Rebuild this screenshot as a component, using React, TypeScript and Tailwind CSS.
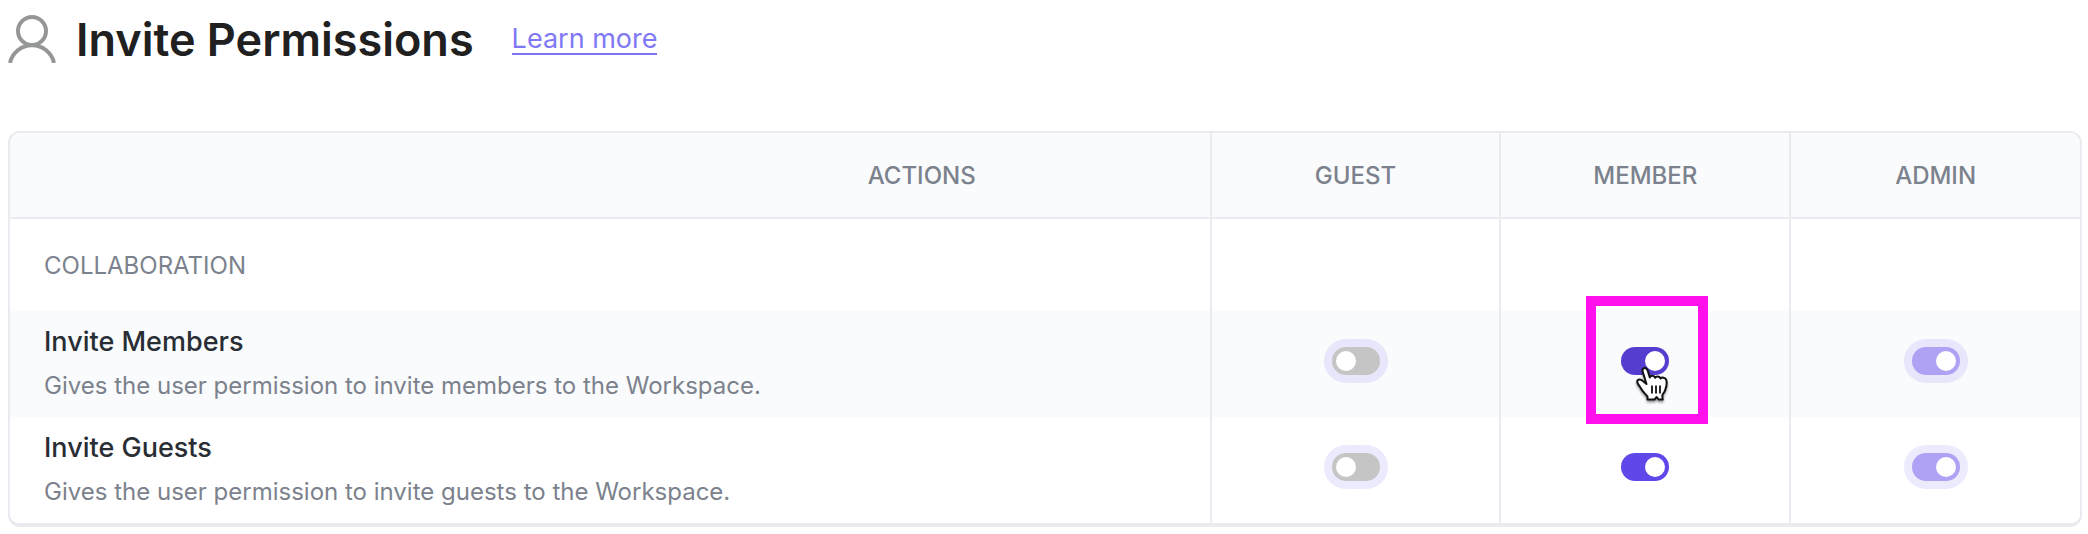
import { useState } from 'react';

type Role = 'guest' | 'member' | 'admin';

interface Permission {
  id: string;
  title: string;
  description: string;
}

const roles: Role[] = ['guest', 'member', 'admin'];

const permissions: Permission[] = [
  {
    id: 'members',
    title: 'Invite Members',
    description: 'Gives the user permission to invite members to the Workspace.',
  },
  {
    id: 'guests',
    title: 'Invite Guests',
    description: 'Gives the user permission to invite guests to the Workspace.',
  },
];

function UserIcon() {
  return (
    <svg width="48" height="48" viewBox="0 0 48 48" fill="none" stroke="#959796" strokeWidth="4" aria-hidden="true">
      <circle cx="24" cy="16" r="14" />
      <path d="M2 48a22.5 22.5 0 0 1 44 0" />
    </svg>
  );
}

function HandCursor() {
  return (
    <svg
      width="32"
      height="36"
      viewBox="0 0 32 36"
      className="drop-shadow-[0_2px_1px_rgba(0,0,0,0.4)]"
      aria-hidden="true"
    >
      <path
        d="M11.500 32.500v-3C9 26.500 6.500 24.500 5 21.500 4 19 1.200 17 1.200 14.800c0-2.600 3.300-3.100 5.300-1.100l4 3.300L6.800 5C6 2.500 7 1 8.700 1c1.800 0 2.600 1.300 3.100 3l2 6.500c.7-2.200 4.500-2.300 5.400.3 1-1.800 4.400-1.600 5.300.7 1.300-1.600 5-1 5.800 1.500.8 3-.3 8-1.300 10.500-.6 1.800-2.500 3.500-2.700 5l.4 4h-4l-2-2.500-2.200 2.500z"
        fill="#fff"
        stroke="#111"
        strokeWidth="2"
        strokeLinejoin="round"
      />
      <path d="M16 18.500v8M20 18.500v8M24 18.500v8" stroke="#111" strokeWidth="1.800" />
    </svg>
  );
}

interface ToggleProps {
  label: string;
  checked: boolean;
  locked: boolean;
  active: boolean;
  onChange: () => void;
}

function Toggle({ label, checked, locked, active, onChange }: ToggleProps) {
  return (
    <span className={`inline-flex rounded-full p-2 ${locked ? 'bg-[#7b68ee]/14' : ''}`}>
      <input
        type="checkbox"
        role="switch"
        aria-label={label}
        checked={checked}
        disabled={locked}
        onChange={onChange}
        className={`h-7 w-12 appearance-none rounded-full bg-[#c5c5c5] p-1 before:block before:size-5 before:rounded-full before:bg-white checked:before:ml-auto enabled:cursor-pointer disabled:checked:bg-[#afa2f5] ${
          active ? 'checked:bg-[#543dcf]' : 'checked:bg-[#5f48ea]'
        }`}
      />
    </span>
  );
}

export default function App() {
  const [memberAccess, setMemberAccess] = useState<Record<string, boolean>>({ members: true, guests: true });

  const isChecked = (role: Role, id: string) => {
    if (role === 'member') return memberAccess[id];
    return role === 'admin';
  };

  return (
    <div className="bg-white pt-[11px] pr-[6px] pb-2 pl-2 font-['Inter',sans-serif]">
      {/* Title */}
      <header className="mb-16 flex h-14 items-center">
        <UserIcon />
        <div className="ml-5 flex items-center gap-[38px] pt-[2px]">
          <h1 className="text-[45px] leading-[54px] font-semibold text-[#202020]">Invite Permissions</h1>
          <a href="#learn-more" className="border-b-2 border-[#7b74f4] text-[27px] leading-7 text-[#7f78f5]">
            Learn more
          </a>
        </div>
      </header>

      {/* Permissions table */}
      <div className="overflow-hidden rounded-xl border-2 border-b-4 border-[#e9ebf0]">
        <table className="w-full table-fixed border-collapse">
          <thead>
            <tr className="h-[85px] border-b-2 border-[#e9ebf0] bg-[#fafbfc] text-2xl text-[#7c828d] uppercase">
              <th className="pt-[2px] font-medium">
                <div className="ml-auto w-[48%]">Actions</div>
              </th>
              {roles.map((role) => (
                <th key={role} className="w-[14%] border-l-2 border-[#e9ebf0] pt-[2px] font-medium">
                  {role}
                </th>
              ))}
            </tr>
          </thead>
          <tbody>
            <tr className="h-[93px]">
              <th className="px-[34px] pt-[2px] text-left text-2xl font-normal text-[#7c828d] uppercase">
                Collaboration
              </th>
              {roles.map((role) => (
                <td key={role} className="border-l-2 border-[#e9ebf0]" />
              ))}
            </tr>
            {permissions.map(({ id, title, description }) => (
              <tr key={id} className="h-[106px] odd:bg-white even:bg-[#fafbfc]">
                <th className="px-[34px] text-left font-normal">
                  <div className="mb-2 text-[27px] leading-9 font-medium text-[#292d34]">{title}</div>
                  <p className="text-2xl leading-9 text-[#7c828d]">{description}</p>
                </th>
                {roles.map((role) => {
                  const active = role === 'member' && id === 'members';
                  return (
                    <td key={role} className="border-l-2 border-[#e9ebf0] pb-[6px] text-center">
                      <div className="relative flex justify-center">
                        <Toggle
                          label={`${title}: ${role}`}
                          checked={isChecked(role, id)}
                          locked={role !== 'member'}
                          active={active}
                          onChange={() => setMemberAccess({ ...memberAccess, [id]: !memberAccess[id] })}
                        />
                        {active && (
                          <div className="pointer-events-none absolute -top-[43px] left-1/2 -ml-[59px] h-32 w-[122px] border-[10px] border-[#ff10ec]">
                            <div className="absolute top-[61px] left-10">
                              <HandCursor />
                            </div>
                          </div>
                        )}
                      </div>
                    </td>
                  );
                })}
              </tr>
            ))}
          </tbody>
        </table>
      </div>
    </div>
  );
}
